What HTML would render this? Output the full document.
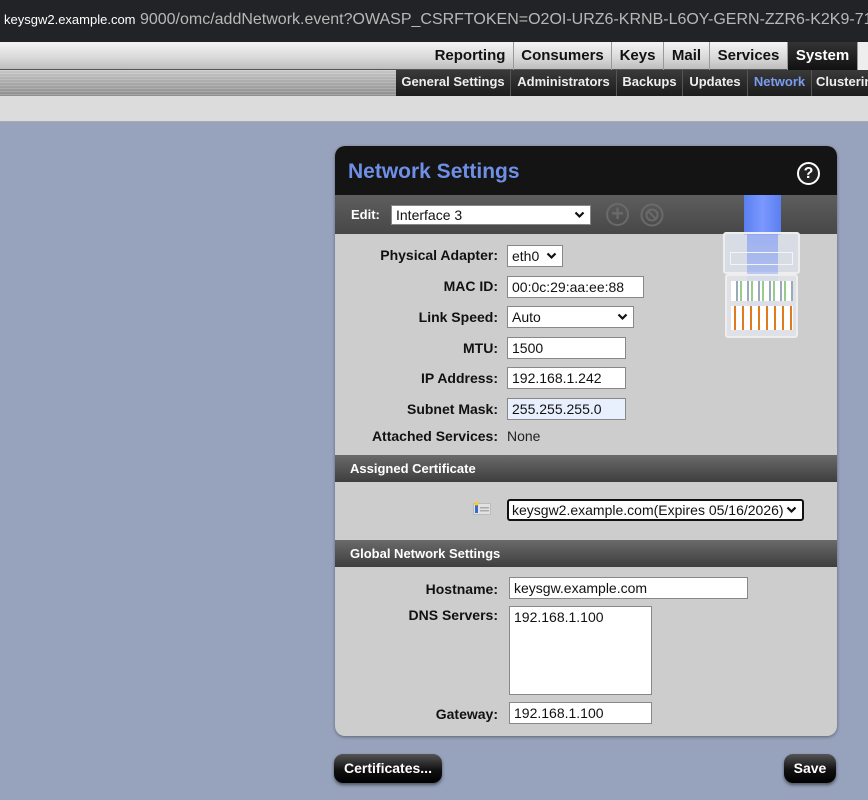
<!DOCTYPE html>
<html><head><meta charset="utf-8"><style>
*{box-sizing:border-box;margin:0;padding:0}
body{width:868px;height:800px;overflow:hidden;background:#97a3bd;font-family:"Liberation Sans",Arial,sans-serif;position:relative}
.a{position:absolute}
.top{left:0;top:0;width:868px;height:42px;background:#222326}
.url{left:4px;top:11px;font-size:16px;color:#b8b8b8;white-space:nowrap}
.url b{font-weight:normal;color:#fff;font-size:13px}
.nav1{left:0;top:42px;width:868px;height:28px;background:linear-gradient(#f4f4f4,#d8d8d8 60%,#bdbdbd);border-bottom:1px solid #555}
.tab{position:absolute;top:0;height:28px;font-weight:bold;font-size:15px;color:#111;line-height:28px;text-align:center;border-left:1px solid #999}
.nav2{left:0;top:70px;width:868px;height:26px;background:linear-gradient(#c8c8c8,#a8a8a8 50%,#8e8e8e);}
.nav2s{left:0;top:70px;width:396px;height:26px;background:repeating-linear-gradient(rgba(255,255,255,.18) 0 1px,transparent 1px 3px)}
.nav2r{left:396px;top:70px;width:472px;height:26px;background:linear-gradient(#3a3a3a,#1c1c1c)}
.st{position:absolute;top:0;height:26px;line-height:24px;font-weight:bold;font-size:13px;color:#eee;text-align:center;border-left:1px solid #555}
.nav3{left:0;top:96px;width:868px;height:26px;background:#dcdcdc;border-bottom:1px solid #aaa}
.panel{left:335px;top:146px;width:502px;height:590px;background:#cdcdcd;border-radius:10px;overflow:hidden;box-shadow:0 1px 3px rgba(0,0,0,.4)}
.hd{left:0;top:0;width:502px;height:49px;background:#141414}
.ttl{left:13px;top:14px;font-size:21px;font-weight:bold;color:#6f8fe6}
.help{left:462px;top:16px;width:23px;height:23px;border-radius:50%;border:2px solid #fff;color:#fff;font-weight:bold;font-size:16px;text-align:center;line-height:19px;background:#222}
.eb{left:0;top:49px;width:502px;height:39px;background:linear-gradient(#5e5e5e,#474747)}
.lbl{font-size:14px;font-weight:bold;color:#111;text-align:right;width:163px;left:0}
.inp{background:#fff;border:1px solid #888;font-size:14px;color:#111;padding:3px 4px;line-height:14px;white-space:nowrap}
.sec{left:0;width:502px;height:27px;background:linear-gradient(#6a6a6a,#3e3e3e);color:#fff;font-size:13px;font-weight:bold;padding:6px 15px}
.btn{height:29px;border-radius:9px;background:linear-gradient(#555,#111 55%,#000);color:#fff;font-weight:bold;font-size:14px;text-align:center;line-height:28px;box-shadow:0 2px 3px rgba(0,0,0,.5)}
.chev{position:absolute;right:5px;top:50%;margin-top:-4px;width:11px;height:8px}
</style></head><body>
<svg width="0" height="0" style="position:absolute"><defs><symbol id="cv" viewBox="0 0 11 8"><path d="M1.5 1.5 L5.5 5.5 L9.5 1.5" fill="none" stroke="#111" stroke-width="2.2"/></symbol></defs></svg>
<div class="a top"></div>
<div class="a url"><b>keysgw2.example.com</b> 9000/omc/addNetwork.event?OWASP_CSRFTOKEN=O2OI-URZ6-KRNB-L6OY-GERN-ZZR6-K2K9-71</div>
<div class="a nav1">
<div class="tab" style="left:428px;width:84px;border-left:none">Reporting</div>
<div class="tab" style="left:513px;width:98px">Consumers</div>
<div class="tab" style="left:611px;width:52px">Keys</div>
<div class="tab" style="left:663px;width:46px">Mail</div>
<div class="tab" style="left:709px;width:78px">Services</div>
<div class="tab" style="left:787px;width:70px;background:linear-gradient(#333,#111);color:#fff">System</div>
<div class="tab" style="left:857px;width:11px;background:#eee"></div>
</div>
<div class="a nav2"></div>
<div class="a nav2s"></div>
<div class="a nav2r">
<div class="st" style="left:0;width:114px;border:none">General Settings</div>
<div class="st" style="left:114px;width:106px">Administrators</div>
<div class="st" style="left:220px;width:66px">Backups</div>
<div class="st" style="left:286px;width:65px">Updates</div>
<div class="st" style="left:351px;width:64px;color:#7a9cf0">Network</div>
<div class="st" style="left:415px;width:70px;text-align:left;padding-left:4px">Clustering</div>
</div>
<div class="a nav3"></div>

<div class="a panel">
<div class="a hd"></div>
<div class="a ttl">Network Settings</div>
<div class="a help">?</div>
<div class="a eb"></div>
<div class="a" style="left:16px;top:61px;color:#fff;font-weight:bold;font-size:13px">Edit:</div>
<div class="a inp" style="left:56px;top:59px;width:200px;height:20px;padding:2px 4px">Interface 3<svg class="chev"><use href="#cv"/></svg></div>
<div class="a" style="left:271px;top:57px;width:23px;height:23px;border-radius:50%;border:2px solid #6a6a6a;color:#6a6a6a;font-size:22px;line-height:17px;text-align:center;font-weight:bold">+</div>
<svg class="a" style="left:305px;top:57px" width="24" height="24" viewBox="0 0 24 24"><circle cx="12" cy="12" r="10.5" fill="none" stroke="#6a6a6a" stroke-width="2"/><circle cx="12" cy="12" r="5.5" fill="none" stroke="#6a6a6a" stroke-width="2"/><path d="M8 8 L16 16" stroke="#6a6a6a" stroke-width="2"/></svg>
<!-- connector -->
<div class="a" style="left:409px;top:49px;width:37px;height:40px;background:linear-gradient(90deg,#5a7ff0,#7b98ff,#5a7ff0)"></div>
<div class="a" style="left:388px;top:86px;width:77px;height:42px;border:2px solid #eee;border-radius:3px;background:rgba(220,226,240,.7)"></div>
<div class="a" style="left:412px;top:88px;width:31px;height:100px;background:linear-gradient(rgba(110,140,250,.55),rgba(110,140,250,.1))"></div>
<div class="a" style="left:395px;top:106px;width:63px;height:13px;border:1px solid #f4f4f4"></div>
<div class="a" style="left:390px;top:128px;width:73px;height:64px;border:2px solid #eee;border-radius:3px;background:rgba(228,230,236,.8)"></div>
<div class="a" style="left:396px;top:135px;width:62px;height:20px;background:repeating-linear-gradient(90deg,#fff 0 5px,#9ab 5px 7px,#fff 7px 9px,#9c8 9px 11px)"></div>
<div class="a" style="left:396px;top:160px;width:62px;height:24px;background:repeating-linear-gradient(90deg,#fff 0 3px,#e07a20 3px 5px,#fff 5px 8px)"></div>

<div class="a lbl" style="top:101px">Physical Adapter:</div>
<div class="a inp" style="left:172px;top:99px;width:56px;height:22px">eth0<svg class="chev"><use href="#cv"/></svg></div>
<div class="a lbl" style="top:132px">MAC ID:</div>
<div class="a inp" style="left:172px;top:130px;width:137px;height:22px">00:0c:29:aa:ee:88</div>
<div class="a lbl" style="top:163px">Link Speed:</div>
<div class="a inp" style="left:172px;top:160px;width:127px;height:22px">Auto<svg class="chev"><use href="#cv"/></svg></div>
<div class="a lbl" style="top:194px">MTU:</div>
<div class="a inp" style="left:172px;top:191px;width:119px;height:22px">1500</div>
<div class="a lbl" style="top:224px">IP Address:</div>
<div class="a inp" style="left:172px;top:221px;width:119px;height:22px">192.168.1.242</div>
<div class="a lbl" style="top:255px">Subnet Mask:</div>
<div class="a inp" style="left:172px;top:252px;width:119px;height:22px;background:#e8f0fe">255.255.255.0</div>
<div class="a lbl" style="top:282px">Attached Services:</div>
<div class="a" style="left:172px;top:282px;font-size:14px;color:#222">None</div>

<div class="a sec" style="top:309px">Assigned Certificate</div>
<svg class="a" style="left:138px;top:355px" width="18" height="14" viewBox="0 0 18 14"><rect x="0.5" y="2.5" width="17" height="11" fill="#e2e2e2" stroke="#bbb"/><rect x="2" y="4" width="3" height="8" fill="#3a6ad0"/><circle cx="3.5" cy="2.5" r="2" fill="#f5d020"/><rect x="7" y="6" width="9" height="1.5" fill="#aaa"/><rect x="7" y="9" width="9" height="1.5" fill="#aaa"/></svg>
<div class="a inp" style="left:172px;top:353px;width:297px;height:22px;border:2px solid #111;border-radius:3px;padding:2px 3px">keysgw2.example.com(Expires 05/16/2026)<svg class="chev"><use href="#cv"/></svg></div>

<div class="a sec" style="top:394px">Global Network Settings</div>
<div class="a lbl" style="top:435px">Hostname:</div>
<div class="a inp" style="left:174px;top:431px;width:239px;height:22px">keysgw.example.com</div>
<div class="a lbl" style="top:461px">DNS Servers:</div>
<div class="a inp" style="left:174px;top:460px;width:143px;height:89px">192.168.1.100</div>
<div class="a lbl" style="top:560px">Gateway:</div>
<div class="a inp" style="left:174px;top:556px;width:143px;height:22px">192.168.1.100</div>
</div>

<div class="a btn" style="left:334px;top:754px;width:108px">Certificates...</div>
<div class="a btn" style="left:784px;top:754px;width:52px">Save</div>
</body></html>
